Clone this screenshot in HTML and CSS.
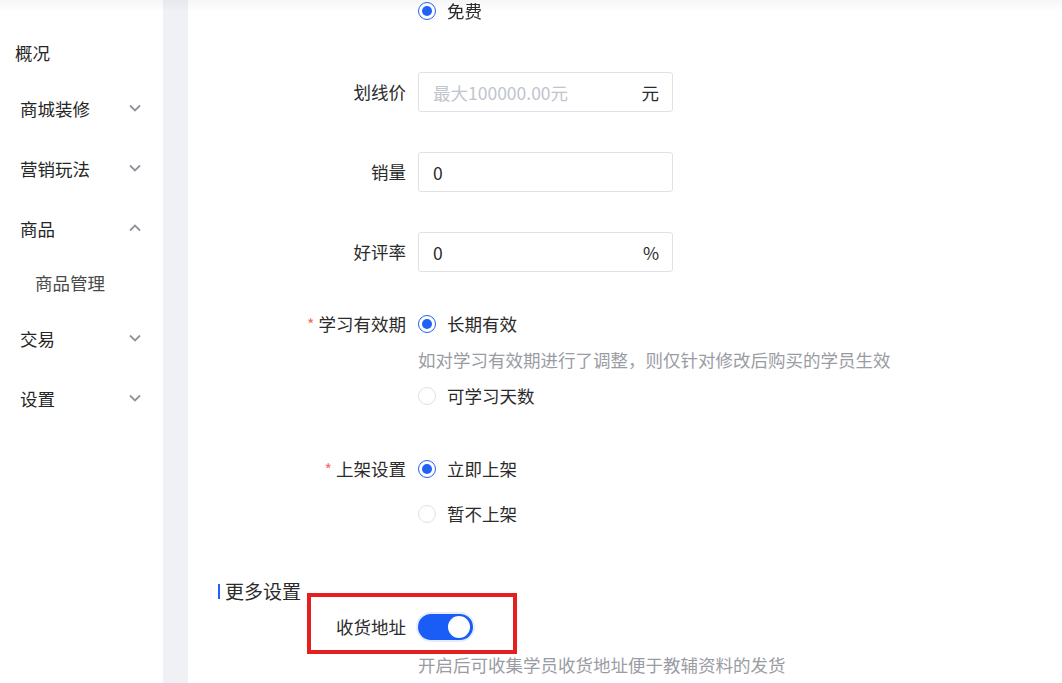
FILE: index.html
```html
<!DOCTYPE html>
<html lang="zh-CN">
<head>
    <meta charset="UTF-8">
    <meta name="viewport" content="width=device-width, initial-scale=1.0">
    <title>商品管理 - 编辑商品</title>
    <link rel="stylesheet" href="styles.css">
</head>
<body>
    <div class="top-shadow"></div>

    <div class="layout">
        <!-- 侧边菜单 -->
        <aside class="sidebar">
            <div class="menu-overview">概况</div>
            <div class="menu-item">
                <span>商城装修</span>
                <svg class="chevron" viewBox="0 0 12 8"><path d="M1 1.5l5 5 5-5"/></svg>
            </div>
            <div class="menu-item">
                <span>营销玩法</span>
                <svg class="chevron" viewBox="0 0 12 8"><path d="M1 1.5l5 5 5-5"/></svg>
            </div>
            <div class="menu-item">
                <span>商品</span>
                <svg class="chevron" viewBox="0 0 12 8"><path d="M1 6.5l5-5 5 5"/></svg>
            </div>
            <div class="menu-sub">商品管理</div>
            <div class="menu-item">
                <span>交易</span>
                <svg class="chevron" viewBox="0 0 12 8"><path d="M1 1.5l5 5 5-5"/></svg>
            </div>
            <div class="menu-item">
                <span>设置</span>
                <svg class="chevron" viewBox="0 0 12 8"><path d="M1 1.5l5 5 5-5"/></svg>
            </div>
        </aside>

        <!-- 表单内容 -->
        <main class="main">
            <div class="form-item item-free">
                <div class="form-label"></div>
                <div class="form-control">
                    <label class="radio"><span class="radio-dot checked"></span>免费</label>
                </div>
            </div>

            <div class="form-item item-input">
                <div class="form-label">划线价</div>
                <div class="form-control">
                    <div class="input">
                        <span class="placeholder">最大100000.00元</span>
                        <span>元</span>
                    </div>
                </div>
            </div>

            <div class="form-item item-input">
                <div class="form-label">销量</div>
                <div class="form-control">
                    <div class="input"><span>0</span></div>
                </div>
            </div>

            <div class="form-item item-input">
                <div class="form-label">好评率</div>
                <div class="form-control">
                    <div class="input"><span>0</span><span>%</span></div>
                </div>
            </div>

            <div class="form-item item-period">
                <div class="form-label"><span class="required">*</span>学习有效期</div>
                <div class="form-control">
                    <label class="radio"><span class="radio-dot checked"></span>长期有效</label>
                    <p class="tip">如对学习有效期进行了调整，则仅针对修改后购买的学员生效</p>
                    <label class="radio"><span class="radio-dot"></span>可学习天数</label>
                </div>
            </div>

            <div class="form-item item-shelf">
                <div class="form-label"><span class="required">*</span>上架设置</div>
                <div class="form-control">
                    <label class="radio"><span class="radio-dot checked"></span>立即上架</label>
                    <label class="radio"><span class="radio-dot"></span>暂不上架</label>
                </div>
            </div>

            <h3 class="section-title">更多设置</h3>

            <div class="form-item item-address">
                <div class="form-label">收货地址</div>
                <div class="form-control">
                    <span class="switch on"><span class="switch-knob"></span></span>
                    <p class="tip">开启后可收集学员收货地址便于教辅资料的发货</p>
                </div>
                <span class="highlight"></span>
            </div>
        </main>
    </div>
</body>
</html>
```

FILE: styles.css
```css
/* General Styles */
* {
    box-sizing: border-box;
}

body {
    margin: 0;
    font-family: "Noto Sans CJK SC", "Noto Sans", sans-serif;
    font-size: 17.5px;
    color: #2b2b2b;
    background: #fff;
}

.top-shadow {
    position: fixed;
    top: 0;
    left: 0;
    right: 0;
    height: 12px;
    background: linear-gradient(rgba(0, 0, 0, 0.035), rgba(0, 0, 0, 0));
    pointer-events: none;
}

.layout {
    display: flex;
    min-height: 683px;
    background: #eff1f5;
}

/* Sidebar */
.sidebar {
    width: 163px;
    flex-shrink: 0;
    background: #fff;
    padding-top: 28px;
}

.menu-overview {
    height: 50px;
    line-height: 50px;
    padding-left: 15px;
    color: #262626;
}

.menu-item {
    height: 60px;
    display: flex;
    align-items: center;
    justify-content: space-between;
    padding: 0 22px 0 20px;
    color: #262626;
}

.menu-sub {
    height: 50px;
    line-height: 50px;
    padding-left: 35px;
    color: #4a4a4a;
}

.chevron {
    width: 12px;
    height: 8px;
    fill: none;
    stroke: #8f939c;
    stroke-width: 1.8;
}

/* Main */
.main {
    flex: 1;
    margin-left: 25px;
    background: #fff;
    padding: 0 30px;
}

.form-item {
    display: flex;
    position: relative;
}

.form-label {
    width: 200px;
    flex-shrink: 0;
    padding-right: 12px;
    text-align: right;
    line-height: 24px;
}

.required {
    color: #f56c6c;
    font-size: 16px;
    margin-right: 4px;
    vertical-align: top;
}

.form-control {
    display: flex;
    flex-direction: column;
    align-items: flex-start;
}

.item-free {
    margin-bottom: 50px;
}

.item-free .radio {
    line-height: 22px;
}

.item-input {
    margin-bottom: 40px;
}

.item-input .form-label {
    line-height: 40px;
}

.input {
    width: 255px;
    height: 40px;
    border: 1px solid #dfe1e6;
    border-radius: 3px;
    padding: 0 13px 0 14px;
    display: flex;
    align-items: center;
    justify-content: space-between;
    color: #2b2b2b;
}

.placeholder {
    color: #c0c4cc;
}

/* Radio */
.radio {
    display: flex;
    align-items: center;
    line-height: 24px;
}

.radio-dot {
    width: 18px;
    height: 18px;
    border: 1px solid #dfe1e6;
    border-radius: 50%;
    margin-right: 11px;
    display: flex;
    align-items: center;
    justify-content: center;
}

.radio-dot.checked {
    border-color: #1f62f5;
}

.radio-dot.checked::after {
    content: "";
    width: 10px;
    height: 10px;
    border-radius: 50%;
    background: #1f62f5;
}

.tip {
    margin: 12px 0;
    line-height: 24px;
    color: #9a9ca3;
}

.item-period {
    margin-bottom: 49px;
}

.item-shelf {
    margin-bottom: 53px;
}

.item-shelf .radio + .radio {
    margin-top: 21px;
}

/* More settings */
.section-title {
    margin: 0 0 11px;
    font-size: 19px;
    font-weight: normal;
    line-height: 24px;
    display: flex;
    align-items: center;
}

.section-title::before {
    content: "";
    width: 2px;
    height: 15px;
    background: #1f62f5;
    margin-right: 5px;
}

.item-address .form-label {
    line-height: 26px;
}

.item-address .tip {
    margin: 13px 0 0;
}

.switch {
    width: 55px;
    height: 26px;
    border-radius: 13px;
    background: #1a5cf6;
    display: flex;
    align-items: center;
    justify-content: flex-end;
    padding: 0 3px;
    box-shadow: 0 0 0 2px rgba(31, 98, 245, 0.12);
}

.switch-knob {
    width: 22px;
    height: 22px;
    border-radius: 50%;
    background: #fff;
}

.highlight {
    position: absolute;
    left: 89px;
    top: -21px;
    width: 210px;
    height: 61px;
    border: 4px solid #e3201f;
    pointer-events: none;
}
```
